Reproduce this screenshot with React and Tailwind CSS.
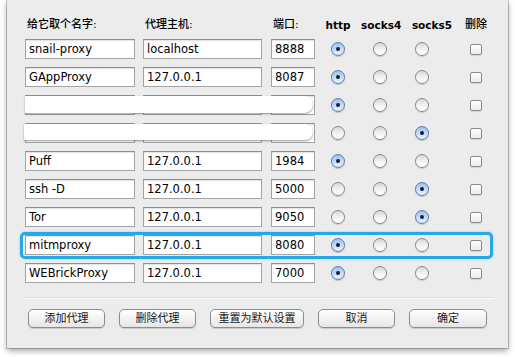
const rows = [
  { name: "snail-proxy", host: "localhost", port: "8888", type: "http" },
  { name: "GAppProxy", host: "127.0.0.1", port: "8087", type: "http" },
  { name: "", host: "", port: "", type: "http", glitch: "top" },
  { name: "", host: "", port: "", type: "socks5", glitch: "mid" },
  { name: "Puff", host: "127.0.0.1", port: "1984", type: "http" },
  { name: "ssh -D", host: "127.0.0.1", port: "5000", type: "socks5" },
  { name: "Tor", host: "127.0.0.1", port: "9050", type: "socks5" },
  { name: "mitmproxy", host: "127.0.0.1", port: "8080", type: "http", focus: true },
  { name: "WEBrickProxy", host: "127.0.0.1", port: "7000", type: "http" },
];

const buttons = [
  { label: "添加代理", w: "w-[77px]" },
  { label: "删除代理", w: "w-[77px]" },
  { label: "重置为默认设置", w: "w-[94px]" },
  { label: "取消", w: "w-[77px]" },
  { label: "确定", w: "w-[78px]" },
];

function Field({ value, width }) {
  return (
    <div
      className={`${width} h-[20px] shrink-0 bg-white border border-[#a3a3a3] border-t-[#8e8e8e] shadow-[inset_0_1px_1px_rgba(0,0,0,0.12)] pl-[3px] text-[11.5px] leading-[18px] text-black whitespace-nowrap overflow-hidden`}
    >
      {value}
    </div>
  );
}

function Radio({ on }) {
  if (on) {
    return (
      <div className="w-[14px] h-[14px] rounded-full border border-[#5b7fb0] bg-[linear-gradient(180deg,#9fc1ec_0%,#c9ddf6_55%,#e6f0fc_100%)] flex items-center justify-center shadow-[0_1px_1px_rgba(0,0,0,0.18)]">
        <div className="w-[4px] h-[4px] rounded-full bg-[#14203a]" />
      </div>
    );
  }
  return (
    <div className="w-[14px] h-[14px] rounded-full border border-[#8a8a8a] bg-[linear-gradient(180deg,#d6d6d6_0%,#f2f2f2_50%,#ffffff_100%)] shadow-[0_1px_1px_rgba(0,0,0,0.15)]" />
  );
}

function Check() {
  return (
    <div className="w-[12px] h-[11px] rounded-[2px] border border-[#8a8a8a] bg-[linear-gradient(180deg,#ffffff,#ececec)] shadow-[0_1px_1px_rgba(0,0,0,0.1)]" />
  );
}

function ProxyRow({ row }) {
  return (
    <div className="relative flex items-center h-[20px]">
      <Field value={row.name} width="w-[110px]" />
      <div className="w-[8px] shrink-0" />
      <Field value={row.host} width="w-[119px]" />
      <div className="w-[9px] shrink-0" />
      <Field value={row.port} width="w-[44px]" />
      <div className="w-[46px] flex justify-center">
        <Radio on={row.type === "http"} />
      </div>
      <div className="w-[38px] flex justify-center">
        <Radio on={row.type === "socks4"} />
      </div>
      <div className="w-[46px] flex justify-center">
        <Radio on={row.type === "socks5"} />
      </div>
      <div className="w-[62px] flex justify-center">
        <Check />
      </div>

      {/* half-drawn rows: white pill smeared over the fields */}
      {row.glitch === "top" && (
        <div className="absolute left-0 top-[1px] w-[288px] h-[17px] bg-white rounded-r-full rounded-bl-[9px] shadow-[0_1px_2px_rgba(0,0,0,0.4)]" />
      )}
      {row.glitch === "mid" && (
        <div className="absolute -left-[1px] top-[1px] w-[289px] h-[16px] bg-white rounded-r-full rounded-l-[8px] shadow-[0_1px_2px_rgba(0,0,0,0.4)]" />
      )}

      {row.focus && (
        <div className="absolute -left-[5px] -top-[3px] w-[473px] h-[27px] border-[3px] border-[#24a8e6] rounded-[5px] shadow-[0_0_2px_rgba(36,168,230,0.6)]" />
      )}
    </div>
  );
}

export default function App() {
  return (
    <div
      className="w-[515px] h-[357px] bg-white overflow-hidden"
      style={{ fontFamily: '"DejaVu Sans", "Noto Sans CJK SC", sans-serif' }}
    >
      <div className="ml-[7px] w-[501px] h-[348px] bg-[#ececec] shadow-[0_0_0_1px_rgba(0,0,0,0.2),0_3px_6px_rgba(0,0,0,0.35)] pl-[18px] pt-[18px]">
        {/* column headers */}
        <div className="flex items-center h-[14px] text-[11px] leading-[14px] text-black font-medium">
          <div className="w-[110px] pl-[2px]">给它取个名字:</div>
          <div className="w-[8px]" />
          <div className="w-[119px] pl-[2px]">代理主机:</div>
          <div className="w-[9px]" />
          <div className="w-[44px] pl-[2px]">端口:</div>
          <div className="w-[46px] text-center font-bold text-[10.5px]">http</div>
          <div className="w-[38px] text-center font-bold text-[10.5px] whitespace-nowrap">socks4</div>
          <div className="w-[66px] text-center font-bold text-[10.5px]">socks5</div>
          <div className="w-[22px] text-center whitespace-nowrap">删除</div>
        </div>

        {/* proxy list */}
        <div className="mt-[7px] flex flex-col gap-[8px]">
          {rows.map((row, i) => (
            <ProxyRow key={i} row={row} />
          ))}
        </div>

        <div className="mt-[15px] -ml-[3px] w-[471px] h-[1px] bg-[#fafafa] shadow-[0_-1px_0_#dedede]" />

        {/* action buttons */}
        <div className="mt-[10px] ml-[3px] flex gap-[14px]">
          {buttons.map((b) => (
            <button
              key={b.label}
              className={`${b.w} h-[19px] rounded-[5px] border border-[#8c8c8c] bg-[linear-gradient(180deg,#ffffff_0%,#f3f3f3_50%,#e6e6e6_100%)] shadow-[0_1px_1px_rgba(0,0,0,0.15)] text-[11px] leading-[17px] text-[#1a1a1a] text-center`}
            >
              {b.label}
            </button>
          ))}
        </div>
      </div>
    </div>
  );
}
